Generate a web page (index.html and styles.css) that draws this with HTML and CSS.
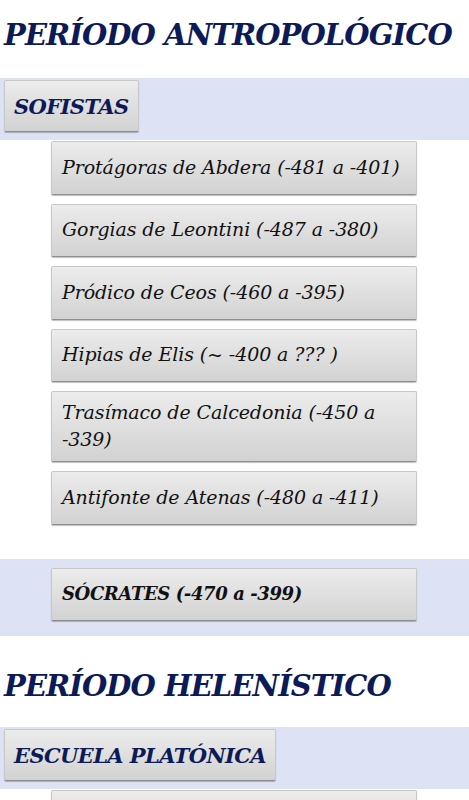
FILE: index.html
```html
<html>
<head>
<title>Filosofía griega</title>
<link rel="stylesheet" href="styles.css">
</head>
<body>

<h1 class="period">PERÍODO ANTROPOLÓGICO</h1>

<div class="band">
  <button class="school">SOFISTAS</button>
</div>
<div class="list">
  <button class="item">Protágoras de Abdera (-481 a -401)</button>
  <button class="item">Gorgias de Leontini (-487 a -380)</button>
  <button class="item">Pródico de Ceos (-460 a -395)</button>
  <button class="item">Hipias de Elis (~ -400 a ??? )</button>
  <button class="item">Trasímaco de Calcedonia (-450 a -339)</button>
  <button class="item">Antifonte de Atenas (-480 a -411)</button>
</div>

<div class="band single">
  <button class="item bold">SÓCRATES (-470 a -399)</button>
</div>

<h1 class="period later">PERÍODO HELENÍSTICO</h1>

<div class="band">
  <button class="school">ESCUELA PLATÓNICA</button>
</div>
<div class="list">
  <button class="item">Platón (-427 a -347)</button>
</div>

</body>
</html>
```

FILE: styles.css
```css
body {
  font-family: "DejaVu Serif", "Liberation Serif", serif;
  font-style: italic;
  margin: 0;
  background: #fff;
}

.period {
  color: #0c1a58;
  font-size: 29px;
  line-height: 36px;
  font-weight: bold;
  white-space: nowrap;
  margin: 0;
  padding: 17px 4px 0 4px;
  height: 78px;
  box-sizing: border-box;
  letter-spacing: -0.9px;
}

.period.later {
  margin-top: 13px;
  padding-top: 19px;
}

.band {
  background: #dde3f5;
  padding: 2px 4px 8px 4px;
}

.band.single {
  margin-top: 34px;
  padding: 9px 0 15px 51px;
}

button {
  font-family: inherit;
  font-style: italic;
  display: block;
  text-align: left;
  background: linear-gradient(#ececec, #d2d2d2);
  border: 1px solid #c8c8c8;
  border-bottom-color: #8e8e8e;
  border-radius: 2px;
  box-shadow: 0 1px 1px rgba(0, 0, 0, 0.25);
  cursor: pointer;
}

.school {
  color: #0c1a58;
  font-weight: bold;
  font-size: 21px;
  height: 52px;
  padding: 0 9px;
  letter-spacing: -0.6px;
}

.list {
  padding: 1px 0 0 51px;
  display: flex;
  flex-direction: column;
  gap: 9px;
}

.item {
  width: 366px;
  min-height: 53.5px;
  padding: 7px 10px 8px 10px;
  color: #111;
  font-size: 19px;
  line-height: 27px;
  letter-spacing: -0.1px;
}

.item.bold {
  font-weight: bold;
  font-size: 18px;
  letter-spacing: -0.4px;
}
```
